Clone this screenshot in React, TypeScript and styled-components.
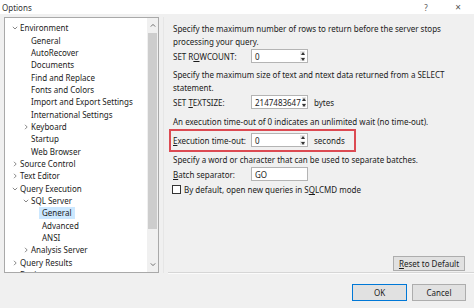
import React from "react";
import styled, { createGlobalStyle } from "styled-components";

const Global = createGlobalStyle`
  html, body { margin: 0; padding: 0; }
  body { width: 474px; height: 308px; overflow: hidden; background: #f0f0f0;
    font-family: "Noto Sans", "Open Sans", sans-serif; color: #1b1b1b; }
  * { box-sizing: border-box; }
`;

const Window = styled.div`
  width: 474px; height: 308px; display: flex; flex-direction: column;
  background: #f0f0f0; font-size: 8px;
`;

const TitleBar = styled.div`
  height: 14px; background: #fff; display: flex; align-items: center;
  padding: 0 0 0 2px; font-size: 8px; color: #333;
`;
const TitleText = styled.span` flex: 1; `;
const TitleBtn = styled.span<{ $size?: number }>`
  width: 32px; text-align: center; color: #555; font-size: ${p => p.$size || 8}px;
`;

const Body = styled.div`
  display: flex; padding: 3px 0 0 4px; height: 259px;
`;

const Tree = styled.div`
  width: 155px; height: 256px; background: #fff; border: 1px solid #a9a9a9;
  display: flex; overflow: hidden;
`;
const TreeList = styled.div`
  flex: 1; padding-top: 4px; overflow: hidden;
`;
const Row = styled.div<{ $level: number }>`
  height: 12.35px; display: flex; align-items: center;
  padding-left: ${p => 4 + p.$level * 11}px; white-space: nowrap;
`;
const Chev = styled.span`
  width: 11px; height: 10px; display: flex; align-items: center; justify-content: center;
`;
const Label = styled.span<{ $sel?: boolean }>`
  padding: 0 3px; margin-left: -3px; line-height: 12px;
  background: ${p => (p.$sel ? "#cce8ff" : "transparent")};
`;

const ScrollBar = styled.div`
  width: 11px; background: #f0f0f0; display: flex; flex-direction: column; align-items: center;
`;
const ScrollArrow = styled.div`
  height: 15px; width: 100%; display: flex; align-items: center; justify-content: center;
`;
const Thumb = styled.div`
  width: 9px; height: 196px; background: #cdcdcd;
`;
const ScrollSpacer = styled.div` flex: 1; `;

const Right = styled.div`
  flex: 1; display: flex; flex-direction: column; margin-left: 4px; padding: 0 0 1px 9px;
  border-left: 1px solid #e6e6e6; height: 256px; position: relative;
`;
const Content = styled.div`
  flex: 1; padding: 6px 0 0 0; display: flex; flex-direction: column;
`;
const Para = styled.div<{ $mt?: number }>`
  line-height: 12.5px; margin-top: ${p => p.$mt || 0}px; white-space: nowrap;
`;
const FieldRow = styled.div<{ $mt?: number }>`
  display: flex; align-items: center; height: 14px; margin-top: ${p => p.$mt || 0}px;
`;
const FieldLabel = styled.span` width: 78px; `;
const InputBox = styled.div`
  width: 57px; height: 14px; background: #fff; border: 1px solid #b4b4b4;
  display: flex; align-items: center;
`;
const InputText = styled.span` flex: 1; padding-left: 3px; `;
const Spin = styled.div`
  width: 7px; height: 12px; display: flex; flex-direction: column; margin-right: 1px;
`;
const SpinBtn = styled.div`
  flex: 1; background: #e6e6e6; display: flex; align-items: center; justify-content: center;
  border: 1px solid #fff;
`;
const Unit = styled.span` margin-left: 6px; `;
const Highlight = styled.div`
  width: 187px; height: 23px; border: 2px solid #dc4a52; margin: 0 0 0 -4px; padding: 0 0 0 2px;
  display: flex; align-items: center;
`;
const CheckRow = styled.div`
  display: flex; align-items: center; height: 13px; margin-top: 2px; margin-left: -1px;
`;
const Box = styled.span`
  width: 9px; height: 9px; border: 1px solid #333; background: #fff; margin-right: 3px;
`;
const U = styled.span` text-decoration: underline; text-underline-offset: 1px; `;

const ResetRow = styled.div`
  display: flex; justify-content: flex-end; padding-right: 9px; margin-bottom: 1px;
`;
const Divider = styled.div`
  position: absolute; left: 4px; right: 0; bottom: -1px; height: 2px;
  border-top: 1px solid #d6d6d6; border-bottom: 1px solid #fbfbfb;
`;
const Btn = styled.button<{ $w: number; $h: number; $primary?: boolean }>`
  width: ${p => p.$w}px; height: ${p => p.$h}px; background: #e1e1e1;
  border: 1px solid ${p => (p.$primary ? "#0078d7" : "#adadad")};
  font-family: inherit; font-size: 8px; color: #1b1b1b; padding: 0;
`;
const Footer = styled.div`
  flex: 1; display: flex; justify-content: flex-end; align-items: flex-start;
  padding: 11px 8px 0 0; gap: 5px;
`;

const ChevIcon = ({ open }: { open: boolean }) => (
  <svg width="6" height="6" viewBox="0 0 6 6">
    <path d={open ? "M0.8 1.8 L3 4 L5.2 1.8" : "M2 0.8 L4.2 3 L2 5.2"} stroke="#6a6a6a" strokeWidth="0.8" fill="none" />
  </svg>
);
const Arrow = ({ up }: { up: boolean }) => (
  <svg width="6" height="5" viewBox="0 0 6 5">
    <path d={up ? "M0.8 3.6 L3 1.4 L5.2 3.6" : "M0.8 1.4 L3 3.6 L5.2 1.4"} stroke="#606060" strokeWidth="0.9" fill="none" />
  </svg>
);
const Tri = ({ up }: { up: boolean }) => (
  <svg width="4" height="3" viewBox="0 0 4 3">
    <path d={up ? "M0 3 L2 0 L4 3 Z" : "M0 0 L2 3 L4 0 Z"} fill="#333" />
  </svg>
);

type Item = { t: string; l: number; c?: "open" | "closed"; sel?: boolean };
const items: Item[] = [
  { t: "Environment", l: 0, c: "open" },
  { t: "General", l: 1 },
  { t: "AutoRecover", l: 1 },
  { t: "Documents", l: 1 },
  { t: "Find and Replace", l: 1 },
  { t: "Fonts and Colors", l: 1 },
  { t: "Import and Export Settings", l: 1 },
  { t: "International Settings", l: 1 },
  { t: "Keyboard", l: 1, c: "closed" },
  { t: "Startup", l: 1 },
  { t: "Web Browser", l: 1 },
  { t: "Source Control", l: 0, c: "closed" },
  { t: "Text Editor", l: 0, c: "closed" },
  { t: "Query Execution", l: 0, c: "open" },
  { t: "SQL Server", l: 1, c: "open" },
  { t: "General", l: 2, sel: true },
  { t: "Advanced", l: 2 },
  { t: "ANSI", l: 2 },
  { t: "Analysis Server", l: 1, c: "closed" },
  { t: "Query Results", l: 0, c: "closed" },
  { t: "Designers", l: 0, c: "closed" },
];

const Spinner = () => (
  <Spin>
    <SpinBtn><Tri up /></SpinBtn>
    <SpinBtn><Tri up={false} /></SpinBtn>
  </Spin>
);

export default function App() {
  return (
    <Window>
      <Global />
      <TitleBar>
        <TitleText>Options</TitleText>
        <TitleBtn>?</TitleBtn>
        <TitleBtn $size={10}>×</TitleBtn>
      </TitleBar>
      <Body>
        <Tree>
          <TreeList>
            {items.map((it, i) => (
              <Row key={i} $level={it.l}>
                <Chev>{it.c && <ChevIcon open={it.c === "open"} />}</Chev>
                <Label $sel={it.sel}>{it.t}</Label>
              </Row>
            ))}
          </TreeList>
          <ScrollBar>
            <ScrollArrow><Arrow up /></ScrollArrow>
            <Thumb />
            <ScrollSpacer />
            <ScrollArrow><Arrow up={false} /></ScrollArrow>
          </ScrollBar>
        </Tree>
        <Right>
          <Content>
            <Para>Specify the maximum number of rows to return before the server stops<br />processing your query.</Para>
            <FieldRow $mt={1}>
              <FieldLabel>SET R<U>O</U>WCOUNT:</FieldLabel>
              <InputBox><InputText>0</InputText><Spinner /></InputBox>
            </FieldRow>
            <Para $mt={6}>Specify the maximum size of text and ntext data returned from a SELECT<br />statement.</Para>
            <FieldRow $mt={1}>
              <FieldLabel>SET <U>T</U>EXTSIZE:</FieldLabel>
              <InputBox><InputText>2147483647</InputText><Spinner /></InputBox>
              <Unit>bytes</Unit>
            </FieldRow>
            <Para $mt={7}>An execution time-out of 0 indicates an unlimited wait (no time-out).</Para>
            <Highlight>
              <FieldRow>
                <FieldLabel><U>E</U>xecution time-out:</FieldLabel>
                <InputBox><InputText>0</InputText><Spinner /></InputBox>
                <Unit>seconds</Unit>
              </FieldRow>
            </Highlight>
            <Para $mt={2}>Specify a word or character that can be used to separate batches.</Para>
            <FieldRow $mt={1}>
              <FieldLabel><U>B</U>atch separator:</FieldLabel>
              <InputBox><InputText>GO</InputText></InputBox>
            </FieldRow>
            <CheckRow>
              <Box />
              <span>By default, open new queries in S<U>Q</U>LCMD mode</span>
            </CheckRow>
          </Content>
          <ResetRow>
            <Btn $w={72} $h={15}><U>R</U>eset to Default</Btn>
          </ResetRow>
          <Divider />
        </Right>
      </Body>
      <Footer>
        <Btn $w={55} $h={17} $primary>OK</Btn>
        <Btn $w={54} $h={17}>Cancel</Btn>
      </Footer>
    </Window>
  );
}
